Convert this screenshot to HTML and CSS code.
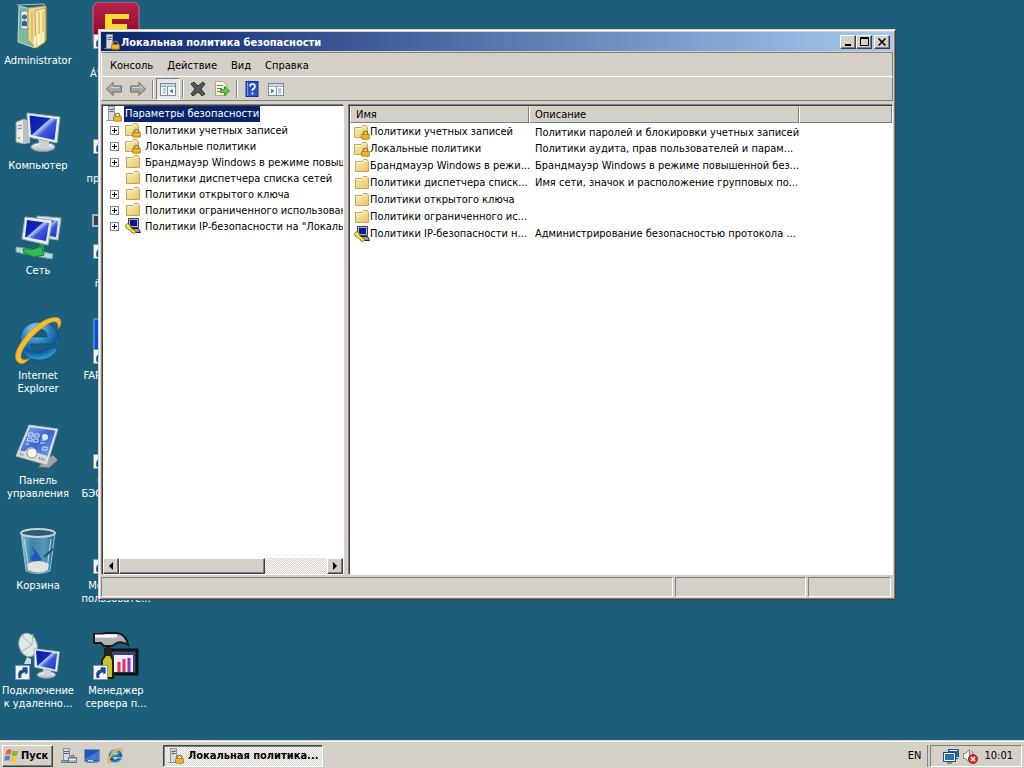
FILE: index.html
```html
<!DOCTYPE html>
<html lang="ru">
<head>
	<meta charset="UTF-8">
	<title>Локальная политика безопасности</title>
	<link rel="stylesheet" href="styles.css">
</head>
<body>
	<svg class="defs" aria-hidden="true">
		<defs>
			<linearGradient id="gScreen" x1="0" y1="0" x2="1" y2="1">
				<stop offset="0" stop-color="#0a1cae"/><stop offset=".42" stop-color="#1226b4"/><stop offset=".46" stop-color="#b4c8fa"/><stop offset=".6" stop-color="#3c58d8"/><stop offset="1" stop-color="#1a2fc0"/>
			</linearGradient>
			<linearGradient id="gFolder" x1="0" y1="0" x2="1" y2="1">
				<stop offset="0" stop-color="#fdf0b4"/><stop offset="1" stop-color="#e6c56a"/>
			</linearGradient>
			<linearGradient id="gSilver" x1="0" y1="0" x2="0" y2="1">
				<stop offset="0" stop-color="#ffffff"/><stop offset="1" stop-color="#a9b0b5"/>
			</linearGradient>
			<linearGradient id="gPanel" x1="0" y1="0" x2="1" y2="1">
				<stop offset="0" stop-color="#8db4f0"/><stop offset=".5" stop-color="#3a68cc"/><stop offset="1" stop-color="#7fa8ee"/>
			</linearGradient>
			<linearGradient id="gBin" x1="0" y1="0" x2="1" y2="0">
				<stop offset="0" stop-color="#8fc3da"/><stop offset=".3" stop-color="#3f82a8"/><stop offset=".7" stop-color="#5597b8"/><stop offset="1" stop-color="#2c6685"/>
			</linearGradient>
			<radialGradient id="gIE" cx=".4" cy=".2" r=".85">
				<stop offset="0" stop-color="#a8dcf0"/><stop offset=".4" stop-color="#2f88be"/><stop offset=".7" stop-color="#0d5796"/><stop offset="1" stop-color="#35b4ee"/>
			</radialGradient>
			<linearGradient id="gRed" x1="0" y1="0" x2="0" y2="1">
				<stop offset="0" stop-color="#b8244f"/><stop offset="1" stop-color="#80001c"/>
			</linearGradient>
		</defs>
		<symbol id="lock" viewBox="0 0 8 8">
			<path d="M2 4V2.600Q2 .8 4 .8T6 2.600V4" fill="none" stroke="#8d7a3c" stroke-width="1.200"/>
			<rect x=".5" y="3.500" width="7" height="4.200" rx=".6" fill="#eeb52c" stroke="#a87412" stroke-width=".7"/>
		</symbol>
		<symbol id="folder" viewBox="0 0 16 16">
			<path d="M1.500 3.500V13.500H14.500V3.500L13 1.500H9.500L8.500 3.500Z" fill="url(#gFolder)" stroke="#c9a552"/>
			<path d="M2.500 4.500H8.500L9.500 2.800H12.800" fill="none" stroke="#fff8d4"/>
		</symbol>
		<symbol id="folderlock" viewBox="0 0 16 16">
			<use href="#folder" x="-1" width="16" height="16"/>
			<use href="#lock" x="7" y="6" width="9" height="10"/>
		</symbol>
		<symbol id="server" viewBox="0 0 16 16">
			<rect x="2.500" y=".5" width="6" height="14" fill="#d4dae0" stroke="#8d969e"/>
			<path d="M3.500 3.500H7.500M3.500 5.500H7.500" stroke="#59636c"/>
			<rect x="6.500" y="2" width="1" height="1" fill="#2fa34a"/>
			<path d="M.5 14.500H9" stroke="#8d969e"/>
			<use href="#lock" x="7" y="6" width="9" height="10"/>
		</symbol>
		<symbol id="ipsec" viewBox="0 0 16 16">
			<path d="M3.500 .5H13.500V9.500H3.500Z" fill="#b4b4b4" stroke="#444450"/>
			<rect x="5" y="2" width="7" height="6" fill="#0a1a8c"/>
			<path d="M5.500 10.500H13.500L15.500 14.500H7Z" fill="#9a9aa4" stroke="#222"/>
			<path d="M.5 7.500L2.500 5.500L5.500 7.500L6 10L11.500 14L8.500 15.500L4 11.800L1.500 10.500Z" fill="#f4e650" stroke="#6f6a20" stroke-width=".8"/>
		</symbol>
		<symbol id="arrow" viewBox="0 0 16 16">
			<path d="M.6 8L7 1.500V5H15.400V11H7V14.500Z" fill="#a5a5a2" stroke="#6a6a67"/>
			<path d="M3 7.500L6 4.500V6.500H14" fill="none" stroke="#d2d2cf"/>
		</symbol>
		<symbol id="panes" viewBox="0 0 16 16">
			<rect x=".5" y="2.500" width="15" height="12" fill="#fff" stroke="#7c8a9c"/>
			<path d="M1 4H15M1 5.500H15" stroke="#9cb0ca" stroke-width="1"/>
			<path d="M7.500 6V14" stroke="#7c8a9c"/>
			<path d="M2.500 8H6M2.500 10H6M2.500 12H6" stroke="#7d9cc4"/>
			<path d="M13 7.500V12.500L9.500 10Z" fill="#38a43c"/>
		</symbol>
		<symbol id="monitor" viewBox="0 0 48 48">
			<ellipse cx="29" cy="40" rx="12" ry="4.500" fill="url(#gSilver)" stroke="#8d979d"/>
			<path d="M24 31L35 33V40H26Z" fill="#cbd2d5"/>
			<path d="M13 6L46 10L43 36L14 30Z" fill="#e8edf0" stroke="#a3adb3"/>
			<path d="M15.500 8.500L43 12L40.500 33L17 28Z" fill="url(#gScreen)"/>
		</symbol>
		<symbol id="ie" viewBox="0 0 48 48">
			<path d="M25 5C13 5 6 13 6 24C6 36 14 43 25 43C34 43 41 38 44 31H32C30 34 28 35 25 35C20 35 17 32 17 27H45V24C45 12 37 5 25 5ZM17 20C17 15 21 12 25 12C30 12 33 15 33 20Z" fill="url(#gIE)" stroke="#0e4c84" stroke-width=".8"/>
			<path d="M5 46C-6 40 11 16 26 6C36 -1 47 -2 47 5C47 8 46 10 44 12C45 6 42 1 31 9C16 19 3 38 8 42C11 44 14 42 16 41C12 46 8 48 5 46Z" fill="#f0bd38" stroke="#b98214" stroke-width=".6"/>
		</symbol>
		<symbol id="shortcut" viewBox="0 0 16 16">
			<rect x=".5" y=".5" width="15" height="15" fill="#f2f6fa" stroke="#8296a5"/>
			<path d="M4 14C2 8 5 5 8 5V2.500H13.500V8.500L11 10V8C8 8 6 10 7 13.500Z" fill="#1c4f88"/>
		</symbol>
		<symbol id="hiddenapp" viewBox="0 0 48 48">
			<rect x="8" y="2" width="38" height="40" fill="#8795a3" stroke="#cdd5dc"/>
			<use href="#shortcut" x="1" y="32" width="15" height="15"/>
		</symbol>
	</svg>

	<main class="desktop">
		<div class="column">
			<a class="icon" href="#">
				<svg viewBox="0 0 48 48">
					<path d="M5 4L21 8V46L4 40Z" fill="#7fb8a0" stroke="#b7dccb"/>
					<rect x="7" y="9" width="7" height="18" fill="#dff0fa" stroke="#5b93a4"/>
					<circle cx="10.500" cy="15" r="2.500" fill="#4c6a84"/><path d="M8 24V20Q10.500 17 13 20V24Z" fill="#365f8c"/>
					<path d="M14 6L32 4V38L22 46L14 38Z" fill="#edd894" stroke="#b79a45"/>
					<path d="M21 9L31 6V40L22 46Z" fill="#f8e9af" stroke="#c4a552"/>
					<path d="M25 10V42M29 9V39M18 10V40" stroke="#c9ab55"/>
					<path d="M3 3L30 2V6" fill="none" stroke="#9fc9d4"/>
					<path d="M21 34V45M25 32V43M29 30V40" stroke="#fff3c8" stroke-width="2"/>
				</svg>
				<span>Administrator</span>
			</a>
			<a class="icon" href="#">
				<svg viewBox="0 0 48 48">
					<path d="M2 15L10 12V37L2 35Z" fill="#e8eceb" stroke="#919b9b"/>
					<path d="M10 12L16 14V36L10 37Z" fill="#b9c1c1"/>
					<path d="M3.500 19L8 18M3.500 22L8 21" stroke="#7d8888"/><circle cx="5" cy="31" r="1" fill="#4fbf4f"/>
					<use href="#monitor" width="48" height="48"/>
				</svg>
				<span>Компьютер</span>
			</a>
			<a class="icon" href="#">
				<svg viewBox="0 0 48 48">
					<path d="M23 4L47 6L44 28L24 25Z" fill="#dce4ea" stroke="#9dabb5"/><path d="M26 7L44 9L42 25L27 23Z" fill="url(#gScreen)"/>
					<path d="M11 5L38 8L34 33L8 27Z" fill="#e8edf2" stroke="#a3afb9"/><path d="M13 8L35 11L32 29L11 25Z" fill="url(#gScreen)"/>
					<path d="M26 31L30 34V39L25 40Z" fill="#25a84c"/>
					<path d="M2 35L16 37L39 42L38 47L15 43L2 40Z" fill="#b6d8d4" stroke="#6fa5a0"/>
					<path d="M9 37L20 37L27 34L29 39L30 43L20 45L10 41Z" fill="#31bb58" stroke="#157a34"/>
				</svg>
				<span>Сеть</span>
			</a>
			<a class="icon" href="#">
				<svg><use href="#ie"/></svg>
				<span>Internet<br>Explorer</span>
			</a>
			<a class="icon" href="#">
				<svg viewBox="0 0 48 48">
					<path d="M30 39L39 33L44 38L35 46L24 45Z" fill="#9aa3a8" stroke="#5f686d"/>
					<path d="M15 3L44 7L33 43L2 34Z" fill="#e4ebf1" stroke="#a4b2bd"/>
					<path d="M16 5L41.500 8.500L33 36L6 29Z" fill="url(#gPanel)"/>
					<path d="M5 28Q12 31 13 27Q19 22 24 31L34 34L32 42L3 34Z" fill="#d8dad6"/>
					<path d="M15 11H19V14H14ZM21 12H25V15H20ZM14 16H18V19H13ZM20 17H24V20H19ZM27 18H32M26 21H31M12 22H15M29 25H33V28H28Z" fill="none" stroke="#cfe1ff"/>
					<circle cx="31" cy="15" r="3" fill="#d9ecff"/>
					<circle cx="18" cy="31" r="5" fill="#f5f4ee" stroke="#8b9195"/>
					<path d="M6 32L10 33M25 36L31 38" stroke="#737b80" stroke-dasharray="1 1" stroke-width="2"/>
				</svg>
				<span>Панель<br>управления</span>
			</a>
			<a class="icon" href="#">
				<svg viewBox="0 0 48 48">
					<path d="M7 6L41 6L36 44Q24 49 12 44Z" fill="url(#gBin)" stroke="#8fbfd6"/>
					<path d="M10 12L15 42M37 12L33 42" stroke="#b5dcec"/>
					<path d="M18 19L22 24L25 28L28 33L20 35L16 31L20 27Z" fill="#2458b8"/>
					<path d="M30 30L39 22" stroke="#22506e" stroke-width="2"/>
					<path d="M13 37Q24 31 35 37L34 43Q24 48 14 43Z" fill="#e4e2df"/>
					<ellipse cx="24" cy="6" rx="17" ry="4" fill="#2c5c76" stroke="#c8d4da" stroke-width="2"/>
				</svg>
				<span>Корзина</span>
			</a>
			<a class="icon" href="#">
				<svg viewBox="0 0 48 48">
					<ellipse cx="14" cy="13" rx="9" ry="12" fill="#dfe9ea" stroke="#8fa3a8" transform="rotate(-15 14 13)"/>
					<path d="M8 4L18 13L7 20M18 13L19 2" fill="none" stroke="#a8b9bd"/>
					<path d="M13 25L17 27V32H10Z" fill="#cfd9dc"/>
					<use href="#monitor" x="10" y="12" width="37" height="37"/>
					<use href="#shortcut" x="1" y="33" width="15" height="15"/>
				</svg>
				<span>Подключение<br>к удаленно...</span>
			</a>
		</div>
		<div class="column">
			<a class="icon" href="#">
				<svg viewBox="0 0 48 48">
					<rect x="1" y="0" width="46" height="46" rx="6" fill="url(#gRed)" stroke="#d26a8a"/>
					<path d="M13 12H37V17H20V22H35V27H20V32H37V38H13Z" fill="#ffd92e"/>
					<use href="#shortcut" x="1" y="32" width="15" height="15"/>
				</svg>
				<span>Äîê<br>Á'ýêàïåð...</span>
			</a>
			<a class="icon" href="#">
				<svg><use href="#hiddenapp"/></svg>
				<span>Файл<br>программы</span>
			</a>
			<a class="icon" href="#">
				<svg viewBox="0 0 48 48">
					<path d="M1 3H46V14H1Z" fill="#394047" stroke="#a9b2b8" stroke-width="2"/>
					<use href="#shortcut" x="1" y="32" width="15" height="15"/>
				</svg>
				<span>Ïðîãðàì<br>ñåðâåðà</span>
			</a>
			<a class="icon" href="#">
				<svg viewBox="0 0 48 48">
					<rect x="2" y="2" width="44" height="40" fill="#0b4fd0" stroke="#6fb8f2"/>
					<use href="#shortcut" x="1" y="32" width="15" height="15"/>
				</svg>
				<span>FAR Manager</span>
			</a>
			<a class="icon" href="#">
				<svg><use href="#hiddenapp"/></svg>
				<span>Сервер<br>БЭСТ-Маркет</span>
			</a>
			<a class="icon" href="#">
				<svg><use href="#hiddenapp"/></svg>
				<span>Менеджер<br>пользовате...</span>
			</a>
			<a class="icon" href="#">
				<svg viewBox="0 0 48 48">
					<rect x="18" y="18" width="27" height="24" fill="#3c4478" stroke="#111" stroke-width="3"/>
					<rect x="22" y="23" width="19" height="17" fill="#f0edf3"/>
					<path d="M27 30V40M32 27V40" stroke="#e0345c" stroke-width="3"/><path d="M37 26V40" stroke="#8a3cc0" stroke-width="3"/>
					<path d="M13 17H19V24L21 28V46H10V28L13 24Z" fill="#c7c232" stroke="#222208" stroke-width="2"/>
					<path d="M16 14V24" stroke="#222" stroke-width="5"/>
					<path d="M2 2H10L14 1H25Q34 2 36 13Q30 9 25 11L20 14H12L9 11H2Z" fill="#aeb2b4" stroke="#17191a" stroke-width="2"/>
					<path d="M3 4H25" stroke="#fff" stroke-width="3"/>
					<use href="#shortcut" x="1" y="33" width="15" height="15"/>
				</svg>
				<span>Менеджер<br>сервера п...</span>
			</a>
		</div>

		<section class="window">
			<header class="titlebar">
				<svg class="ico"><use href="#server"/></svg>
				<h1>Локальная политика безопасности</h1>
				<button class="ctl" aria-label="Свернуть"><svg viewBox="0 0 12 10"><path d="M3 8H9" stroke="#000" stroke-width="2"/></svg></button>
				<button class="ctl" aria-label="Развернуть"><svg viewBox="0 0 12 10"><path d="M2.500 .5H10.500V8.500H2.500ZM2 1.500H11" fill="none" stroke="#000"/></svg></button>
				<button class="ctl close" aria-label="Закрыть"><svg viewBox="0 0 12 10"><path d="M2.500 1.500L9.500 8.500M9.500 1.500L2.500 8.500" stroke="#000" stroke-width="1.600"/></svg></button>
			</header>
			<nav class="menubar">
				<button>Консоль</button>
				<button>Действие</button>
				<button>Вид</button>
				<button>Справка</button>
			</nav>
			<div class="toolbar">
				<button aria-label="Назад"><svg class="ico"><use href="#arrow"/></svg></button>
				<button aria-label="Вперед"><svg class="ico flip"><use href="#arrow"/></svg></button>
				<i class="sep"></i>
				<button class="pressed" aria-label="Дерево консоли"><svg class="ico"><use href="#panes"/></svg></button>
				<i class="sep"></i>
				<button aria-label="Удалить"><svg class="ico" viewBox="0 0 16 16"><path d="M1 3L4 1L8 5L13 1L15 3L11 8L15 13L12 15L8 11L3 15L1 13L5 8Z" fill="#555" stroke="#333"/></svg></button>
				<button aria-label="Экспорт списка"><svg class="ico" viewBox="0 0 16 16"><path d="M1.500 .5H9L12.500 3.500V14.500H1.500Z" fill="#fbf7dc" stroke="#b5aa78"/><path d="M3 4.500H9M3 7.500H8M3 10.500H8" stroke="#747b84"/><path d="M6.500 8.500H10.500V5.500L15.500 10L10.500 14.500V11.500H6.500Z" fill="#63c943" stroke="#3a952a"/></svg></button>
				<i class="sep"></i>
				<button aria-label="Справка"><svg class="ico" viewBox="0 0 16 16"><rect x="2" y=".5" width="12" height="15" fill="#2c54c0" stroke="#17358a"/><path d="M3.500 1V15" stroke="#6e92ea"/><path d="M6 5.500Q6 3 8.500 3T11 5.500Q11 7 8.500 8.500V10M8.500 11.500V13.500" fill="none" stroke="#fff" stroke-width="1.600"/></svg></button>
				<button aria-label="Панель действий"><svg class="ico flip"><use href="#panes"/></svg></button>
			</div>
			<div class="content">
				<div class="tree">
					<div class="root"><svg class="ico"><use href="#server"/></svg><span>Параметры безопасности</span></div>
					<ul>
						<li><button aria-label="Раскрыть"></button><svg class="ico"><use href="#folderlock"/></svg>Политики учетных записей</li>
						<li><button aria-label="Раскрыть"></button><svg class="ico"><use href="#folderlock"/></svg>Локальные политики</li>
						<li><button aria-label="Раскрыть"></button><svg class="ico"><use href="#folder"/></svg>Брандмауэр Windows в режиме повышенной безопасности</li>
						<li class="leaf"><svg class="ico"><use href="#folder"/></svg>Политики диспетчера списка сетей</li>
						<li><button aria-label="Раскрыть"></button><svg class="ico"><use href="#folder"/></svg>Политики открытого ключа</li>
						<li><button aria-label="Раскрыть"></button><svg class="ico"><use href="#folder"/></svg>Политики ограниченного использования программ</li>
						<li><button aria-label="Раскрыть"></button><svg class="ico"><use href="#ipsec"/></svg>Политики IP-безопасности на "Локальный компьютер"</li>
					</ul>
					<div class="scrollbar">
						<button aria-label="Влево"><svg viewBox="0 0 8 8"><path d="M6 0V8L2 4Z"/></svg></button>
						<div class="track"><div class="thumb"></div></div>
						<button aria-label="Вправо"><svg viewBox="0 0 8 8"><path d="M2 0V8L6 4Z"/></svg></button>
					</div>
				</div>
				<div class="list">
					<table>
						<thead>
							<tr><th class="name">Имя</th><th class="descr">Описание</th><th></th></tr>
						</thead>
						<tbody>
							<tr><td><svg class="ico"><use href="#folderlock"/></svg>Политики учетных записей</td><td>Политики паролей и блокировки учетных записей</td><td></td></tr>
							<tr><td><svg class="ico"><use href="#folderlock"/></svg>Локальные политики</td><td>Политики аудита, прав пользователей и парам...</td><td></td></tr>
							<tr><td><svg class="ico"><use href="#folder"/></svg>Брандмауэр Windows в режи...</td><td>Брандмауэр Windows в режиме повышенной без...</td><td></td></tr>
							<tr><td><svg class="ico"><use href="#folder"/></svg>Политики диспетчера списк...</td><td>Имя сети, значок и расположение групповых по...</td><td></td></tr>
							<tr><td><svg class="ico"><use href="#folder"/></svg>Политики открытого ключа</td><td></td><td></td></tr>
							<tr><td><svg class="ico"><use href="#folder"/></svg>Политики ограниченного ис...</td><td></td><td></td></tr>
							<tr><td><svg class="ico"><use href="#ipsec"/></svg>Политики IP-безопасности н...</td><td>Администрирование безопасностью протокола ...</td><td></td></tr>
						</tbody>
					</table>
				</div>
			</div>
			<footer class="statusbar"><div></div><div></div><div></div></footer>
		</section>
	</main>

	<footer class="taskbar">
		<button class="start">
			<svg class="ico" viewBox="0 0 16 16">
				<path d="M2.500 2.500Q5 .5 7.500 2L6.500 7Q4 5.500 1.200 7.200Z" fill="#e8642c"/>
				<path d="M8.500 2.500Q11 4 14.500 2.500L13 7.500Q10 9 7.500 7.500Z" fill="#7cb83c"/>
				<path d="M1 8.500Q3.500 6.800 6.200 8.200L5 13Q2.500 11.500 0 13Z" fill="#4a86d8"/>
				<path d="M7.200 8.800Q10 10 12.800 8.800L11.500 13.500Q9 15.200 6 13.500Z" fill="#f4c232"/>
			</svg>
			Пуск
		</button>
		<div class="quick">
			<button aria-label="Диспетчер сервера"><svg class="ico" viewBox="0 0 16 16"><path d="M2.500 .5H8.500V13.500H2.500Z" fill="#d4dae0" stroke="#858e96"/><path d="M3 3.500H8M3 5.500H8" stroke="#59636c"/><path d="M.5 12.500H6.500V14.500H.5ZM7.500 9.500H15.500V14.500H7.500ZM10 9V7.500H13V9" fill="#aeb6bb" stroke="#68727a"/><path d="M8 11.500H15" stroke="#f1f3f4"/></svg></button>
			<button aria-label="Свернуть все окна"><svg class="ico" viewBox="0 0 16 16"><path d="M.5 1.500H15.500V13.500H.5Z" fill="#2455b4" stroke="#7f93b5"/><path d="M1 11L15 3V12H1Z" fill="#3f78d6"/><path d="M2 14.500H14" stroke="#7a828c"/><path d="M4 12.500H9" stroke="#c5dcf5"/></svg></button>
			<button aria-label="Internet Explorer"><svg class="ico"><use href="#ie"/></svg></button>
		</div>
		<button class="task"><svg class="ico"><use href="#server"/></svg>Локальная политика...</button>
		<span class="lang">EN</span>
		<div class="tray">
			<svg class="ico" viewBox="0 0 16 16"><path d="M5.500 1.500H15.500V8.500H5.500Z" fill="#1e5fa8" stroke="#315476"/><path d="M6.500 2.500H14.500" stroke="#e3effa"/><path d="M1.500 5.500H11.500V12.500H1.500Z" fill="#2572bc" stroke="#fff"/><path d="M.5 4.500H12.500V13.500H.5Z" fill="none" stroke="#27496b"/><path d="M4 15H9M12 10.500H15" stroke="#27496b"/></svg>
			<svg class="ico" viewBox="0 0 16 16"><path d="M1.500 5.500H3.500L7.500 1.500V14.500L3.500 10.500H1.500Z" fill="#f1f1ef" stroke="#85857f"/><path d="M9.500 3Q12 5 11.500 8" fill="none" stroke="#85857f"/><circle cx="11" cy="11" r="4.500" fill="#da3434" stroke="#a41c1c"/><path d="M9 9L13 13M13 9L9 13" stroke="#fff" stroke-width="1.400"/></svg>
			<time>10:01</time>
		</div>
	</footer>
</body>
</html>
```
FILE: styles.css
```css
*{margin:0;padding:0;box-sizing:border-box;}
body{
	height: 100vh;
	display: flex;
	flex-direction: column;
	overflow: hidden;
	background-color: #1d5f7a;
	color: #000;
	font: 11px/13px "DejaVu Sans Condensed", "DejaVu Sans", sans-serif;
}
ul{list-style: none;}
button{
	font: inherit;
	color: inherit;
	background: none;
	border: 0;
}
a{color: inherit;text-decoration: none;}
.defs{position: absolute;width: 0;height: 0;}
.ico{
	width: 16px;
	height: 16px;
	flex: none;
	display: block;
}
.flip{transform: scaleX(-1);}

/* desktop */
.desktop{
	flex: 1;
	min-height: 0;
	position: relative;
	display: flex;
	gap: 2px;
}
.column{width: 76px;flex: none;}
.icon{
	height: 105px;
	padding-top: 2px;
	display: flex;
	flex-direction: column;
	align-items: center;
	color: #fff;
	text-align: center;
	white-space: nowrap;
}
.icon svg{width: 48px;height: 48px;margin-bottom: 4px;flex: none;}

/* window */
.window{
	position: absolute;
	top: 29px;
	left: 98px;
	right: 128px;
	bottom: 140px;
	padding: 2px;
	display: flex;
	flex-direction: column;
	background-color: #d4d0c8;
	border: 1px solid;
	border-color: #d4d0c8 #404040 #404040 #d4d0c8;
	box-shadow: inset 1px 1px #fff, inset -1px -1px #808080;
}
.titlebar{
	height: 19px;
	flex: none;
	padding: 0 3px;
	display: flex;
	align-items: center;
	background: linear-gradient(to right, #0a246a, #a6caf0);
	color: #fff;
}
.titlebar h1{
	flex: 1;
	margin-left: 1px;
	padding-top: 1px;
	font-size: 11px;
}
.ctl{
	width: 16px;
	height: 14px;
	padding: 1px;
}
.ctl svg{display: block;width: 12px;height: 10px;}
.close{margin-left: 2px;}
.ctl, .scrollbar button, .thumb, .start{
	background-color: #d4d0c8;
	border: 1px solid;
	border-color: #fff #404040 #404040 #fff;
	box-shadow: inset -1px -1px #808080;
}
.menubar{
	height: 25px;
	flex: none;
	margin-top: 1px;
	padding: 2px 0 0 1px;
	display: flex;
	border: 1px solid;
	border-color: #808080 #808080 #fff #fff;
}
.menubar button{padding: 0 7px;}
.toolbar{
	height: 24px;
	flex: none;
	display: flex;
	align-items: center;
	border: 1px solid;
	border-color: #d4d0c8 #808080 #808080 #fff;
}
.toolbar button{
	width: 24px;
	height: 22px;
	padding: 3px 4px;
}
.toolbar .pressed{
	padding: 2px 3px;
	border: 1px solid;
	border-color: #808080 #fff #fff #808080;
}
.pressed, .track, .task{
	background: repeating-conic-gradient(#fff 0 25%, #d4d0c8 0 50%) 0 0 / 2px 2px;
}
.sep{
	width: 2px;
	height: 18px;
	margin: 0 2px;
	border-left: 1px solid #808080;
	border-right: 1px solid #fff;
}
.content{
	flex: 1;
	min-height: 0;
	margin-top: 4px;
	display: grid;
	grid-template-columns: 243px 1fr;
	gap: 5px;
}
.tree, .list{
	min-width: 0;
	overflow: hidden;
	background-color: #fff;
	border: 1px solid;
	border-color: #404040 #fff #fff #404040;
	box-shadow: -1px -1px #808080;
}
.tree{
	display: flex;
	flex-direction: column;
	margin-left: 1px;
}
.root, .tree li{
	height: 16px;
	display: flex;
	align-items: center;
	white-space: nowrap;
}
.root{padding-left: 3px;}
.root span{
	margin-left: 2px;
	padding: 1px 1px 2px;
	background-color: #0a246a;
	color: #fff;
}
.tree ul{flex: 1;}
.tree li{padding-left: 7px;}
.tree li.leaf{padding-left: 22px;}
.tree li .ico{margin-right: 4px;}
.tree li button{
	width: 9px;
	height: 9px;
	margin-right: 6px;
	flex: none;
	border: 1px solid #808080;
	background:
		linear-gradient(#000, #000) center / 5px 1px no-repeat,
		linear-gradient(#000, #000) center / 1px 5px no-repeat;
}
.scrollbar{height: 16px;display: flex;}
.scrollbar button{width: 16px;padding: 3px;}
.scrollbar svg{display: block;width: 8px;height: 8px;}
.track{flex: 1;}
.thumb{width: 70%;height: 100%;}

.list table{
	width: 100%;
	table-layout: fixed;
	border-collapse: separate;
	border-spacing: 0;
}
.name{width: 179px;}
.descr{width: 270px;}
.list th{
	height: 17px;
	padding-left: 5px;
	text-align: left;
	font-weight: normal;
	background-color: #d4d0c8;
	border: 1px solid;
	border-color: #d4d0c8 #808080 #808080 #fff;
}
.list td{
	height: 17px;
	padding-left: 6px;
	white-space: nowrap;
}
.list td:first-child{padding-left: 4px;}
.list tbody tr:first-child td{padding-top: 1px;}
.list td .ico{
	display: inline-block;
	vertical-align: middle;
}
.statusbar{
	height: 20px;
	flex: none;
	margin: 2px 2px 0 0;
	display: grid;
	grid-template-columns: 1fr 131px 83px;
	gap: 2px;
}
.statusbar div{
	border: 1px solid;
	border-color: #808080 #fff #fff #808080;
}

/* taskbar */
.taskbar{
	height: 28px;
	flex: none;
	display: flex;
	align-items: center;
	padding: 2px 2px 0;
	background-color: #d4d0c8;
	border-top: 1px solid #d4d0c8;
	box-shadow: inset 0 1px #fff;
}
.start{
	width: 51px;
	height: 22px;
	padding-left: 1px;
	display: flex;
	align-items: center;
	gap: 1px;
	font-weight: bold;
}
.quick{
	display: flex;
	gap: 7px;
	margin: 0 40px 0 8px;
}
.task{
	width: 160px;
	height: 22px;
	padding-left: 4px;
	display: flex;
	align-items: center;
	gap: 4px;
	font-weight: bold;
	white-space: nowrap;
	border: 1px solid;
	border-color: #404040 #fff #fff #404040;
	box-shadow: inset 1px 1px #808080;
}
.lang{margin: 0 9px 0 auto;}
.tray{
	height: 22px;
	padding: 0 8px 0 12px;
	display: flex;
	align-items: center;
	gap: 3px;
	border: 1px solid;
	border-color: #808080 #fff #fff #808080;
	box-shadow: -2px 0 #d4d0c8, -3px 0 #808080;
}
.tray time{margin-left: 3px;}
```
